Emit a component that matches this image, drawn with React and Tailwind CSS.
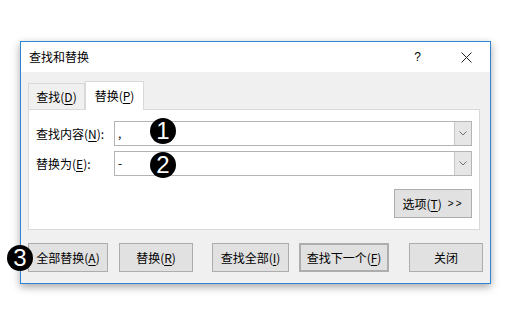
const font = { fontFamily: '"Noto Sans CJK SC", "Liberation Sans", sans-serif' }

const U = ({ children }) => <span className="underline underline-offset-2">{children}</span>

const Marker = ({ n, className }) => (
  <div
    className={`absolute flex h-[26px] w-[26px] items-center justify-center rounded-full bg-black text-[24px] leading-none text-white ${className}`}
    style={{ fontFamily: '"Liberation Sans", sans-serif' }}
  >
    {n}
  </div>
)

const Btn = ({ children, className = '' }) => (
  <button
    className={`flex h-[29px] shrink-0 items-center justify-center border border-[#adadad] bg-[#e1e1e1] text-[12px] leading-none text-[#000] ${className}`}
  >
    {children}
  </button>
)

const Combo = ({ value }) => (
  <div className="flex h-[25px] flex-1 border border-[#b4b4b4] bg-white">
    <div className="flex-1 pl-[3px] text-[12px] leading-[22px]">{value}</div>
    <div className="flex w-[17px] items-center justify-center border-l border-[#c8c8c8] bg-[#e6e6e6]">
      <svg width="8" height="5" viewBox="0 0 8 5">
        <path d="M0.5 0.5 L4 4 L7.5 0.5" fill="none" stroke="#707070" strokeWidth="1" />
      </svg>
    </div>
  </div>
)

export default function App() {
  return (
    <div className="relative h-[332px] w-[509px] bg-white pl-[20px] pt-[41px]" style={font}>
      <div className="w-[471px] border border-[#2e85d2] bg-[#f0f0f0] shadow-[0_3px_8px_rgba(0,0,0,0.35)]">
        <div className="flex h-[30px] items-center bg-white pl-[8px] text-[12px] text-black">
          <span>查找和替换</span>
          <span className="ml-auto mr-[40px] text-[12px]" style={{ fontFamily: '"Liberation Sans", sans-serif' }}>?</span>
          <svg className="mr-[18px]" width="11" height="11" viewBox="0 0 11 11">
            <path d="M0.5 0.5 L10.5 10.5 M10.5 0.5 L0.5 10.5" stroke="#222" strokeWidth="1" />
          </svg>
        </div>

        <div className="pl-[7px] pr-[10px] pt-[9px] pb-[11px]">
          <div className="flex items-end text-[12px] leading-none">
            <div className="flex h-[26px] w-[57px] items-center justify-center border border-b-0 border-[#d9d9d9] bg-[#f0f0f0]">
              查找(<U>D</U>)
            </div>
            <div className="relative z-10 -mb-px flex h-[29px] w-[59px] items-center justify-center border border-b-0 border-[#d9d9d9] bg-white">
              替换(<U>P</U>)
            </div>
          </div>

          <div className="flex flex-col border border-[#d9d9d9] bg-white px-[7px] pt-[11px] pb-[11px] text-[12px]">
            <div className="flex items-center">
              <div className="w-[78px] leading-none">查找内容(<U>N</U>):</div>
              <Combo value="," />
            </div>
            <div className="mt-[5px] flex items-center">
              <div className="w-[78px] leading-none">替换为(<U>E</U>):</div>
              <Combo value="-" />
            </div>
            <div className="mt-[13px] flex justify-end">
              <Btn className="w-[78px]">
                选项(<U>T</U>)
                <span className="ml-[6px] text-[10px] tracking-[2px]" style={{ fontFamily: '"Liberation Sans", sans-serif' }}>&gt;&gt;</span>
              </Btn>
            </div>
          </div>

          <div className="mt-[13px] flex">
            <Btn className="w-[80px]">全部替换(<U>A</U>)</Btn>
            <Btn className="ml-[11px] w-[74px]">替换(<U>R</U>)</Btn>
            <Btn className="ml-[19px] w-[77px]">查找全部(<U>I</U>)</Btn>
            <Btn className="ml-[10px] w-[90px] border-2 border-[#0f78d7]">查找下一个(<U>F</U>)</Btn>
            <Btn className="ml-[20px] w-[74px]">关闭</Btn>
          </div>
        </div>
      </div>

      <Marker n="1" className="left-[150px] top-[118px]" />
      <Marker n="2" className="left-[150px] top-[152px]" />
      <Marker n="3" className="left-[7px] top-[245px]" />
    </div>
  )
}
